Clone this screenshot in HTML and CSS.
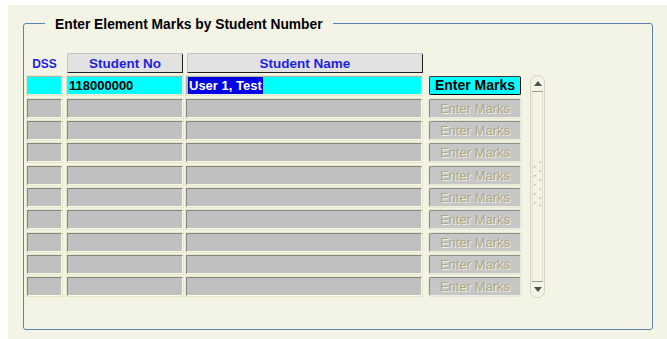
FILE: index.html
```html
<!DOCTYPE html>
<html>
<head>
<meta charset="utf-8">
<title>Enter Element Marks by Student Number</title>
<link rel="stylesheet" href="styles.css">
</head>
<body>
<div class="panel">
  <fieldset class="group">
    <legend class="title">Enter Element Marks by Student Number</legend>
    <div class="grid">
      <div class="hdr-dss">DSS</div>
      <div class="hdr hdr-no">Student No</div>
      <div class="hdr hdr-name">Student Name</div>
      <div class="hdr-spacer"></div>

      <div class="scroll">
        <div class="sb-btn sb-up"><svg width="8" height="5" viewBox="0 0 8 5"><polygon points="0,5 8,5 4,0" fill="#4e4e4e"/></svg></div>
        <div class="sb-track">
          <svg class="grip" width="10" height="52" viewBox="0 0 10 52">
            <g stroke="#8e8e78" stroke-width="1">
              <line x1="7" y1="4" x2="9" y2="2"/>
              <line x1="1" y1="9" x2="3" y2="7"/>
              <line x1="7" y1="14" x2="9" y2="12"/>
              <line x1="1" y1="19" x2="3" y2="17"/>
              <line x1="7" y1="24" x2="9" y2="22"/>
              <line x1="1" y1="29" x2="3" y2="27"/>
              <line x1="7" y1="34" x2="9" y2="32"/>
              <line x1="1" y1="39" x2="3" y2="37"/>
              <line x1="7" y1="44" x2="9" y2="42"/>
              <line x1="1" y1="49" x2="3" y2="47"/>
              <line x1="7" y1="52" x2="9" y2="50"/>
            </g>
          </svg>
        </div>
        <div class="sb-btn sb-down"><svg width="8" height="5" viewBox="0 0 8 5"><polygon points="0,0 8,0 4,5" fill="#4e4e4e"/></svg></div>
      </div>

      <div class="cell c-dss cyan"></div>
      <div class="cell c-no cyan">118000000</div>
      <div class="cell c-name cyan"><span class="sel">User 1, Test</span></div>
      <button class="btn btn-on">Enter Marks</button>

      <div class="cell c-dss"></div><div class="cell c-no"></div><div class="cell c-name"></div><button class="btn btn-off" disabled>Enter Marks</button>
      <div class="cell c-dss"></div><div class="cell c-no"></div><div class="cell c-name"></div><button class="btn btn-off" disabled>Enter Marks</button>
      <div class="cell c-dss"></div><div class="cell c-no"></div><div class="cell c-name"></div><button class="btn btn-off" disabled>Enter Marks</button>
      <div class="cell c-dss"></div><div class="cell c-no"></div><div class="cell c-name"></div><button class="btn btn-off" disabled>Enter Marks</button>
      <div class="cell c-dss"></div><div class="cell c-no"></div><div class="cell c-name"></div><button class="btn btn-off" disabled>Enter Marks</button>
      <div class="cell c-dss"></div><div class="cell c-no"></div><div class="cell c-name"></div><button class="btn btn-off" disabled>Enter Marks</button>
      <div class="cell c-dss"></div><div class="cell c-no"></div><div class="cell c-name"></div><button class="btn btn-off" disabled>Enter Marks</button>
      <div class="cell c-dss"></div><div class="cell c-no"></div><div class="cell c-name"></div><button class="btn btn-off" disabled>Enter Marks</button>
      <div class="cell c-dss"></div><div class="cell c-no"></div><div class="cell c-name"></div><button class="btn btn-off" disabled>Enter Marks</button>
    </div>
  </fieldset>
</div>
</body>
</html>
```
FILE: styles.css
```css
html {
  background: #ffffff;
}
body {
  margin: 0;
  font-family: "Liberation Sans", Arial, sans-serif;
}
.panel {
  margin: 5px 0 0 8px;
  height: 334px;
  box-sizing: border-box;
  background: #f4f4e6;
  padding: 10px 14px 9px 15px;
  display: flex;
  flex-direction: column;
}
.group {
  flex: 1;
  margin: 0;
  min-width: 0;
  border: 1px solid #5c84b0;
  border-radius: 3px;
  padding: 21px 0 0 3px;
}
.title {
  margin-left: 18px;
  padding: 3px 10px 0;
  font-size: 13.8px;
  font-weight: bold;
  line-height: 14px;
  color: #000;
}
.grid {
  display: grid;
  grid-template-columns: 40px 119px 243px 101px 15px;
  grid-template-rows: 20px repeat(10, 19px);
  row-gap: 3.33px;
}
.hdr-dss {
  width: 35px;
  text-align: center;
  color: #1e1ee4;
  font-size: 12px;
  font-weight: bold;
  line-height: 14px;
  padding-top: 4px;
}
.hdr {
  box-sizing: border-box;
  height: 20px;
  background: #e2e2e2;
  border: 1px solid;
  border-color: #c4c4c4 #1e1e1e #1e1e1e #c4c4c4;
  border-radius: 2px 2px 0 0;
  color: #1e1ee4;
  font-size: 13.5px;
  font-weight: bold;
  line-height: 19px;
  text-align: center;
}
.hdr-no { width: 116px; }
.hdr-name { width: 236px; margin-left: 1px; }
.hdr-spacer { grid-column: span 2; }

.cell {
  box-sizing: border-box;
  height: 19px;
  background: #c0c0c0;
  border: 1px solid;
  border-color: #86867e #fbfbe8 #fbfbe8 #86867e;
  box-shadow: 0 0 0 1px #e6e6c8;
  font-size: 13px;
  font-weight: bold;
  line-height: 17px;
  padding-left: 1px;
  color: #000;
  white-space: nowrap;
}
.c-dss { width: 35px; }
.c-no { width: 116px; }
.c-name { width: 236px; }
.cyan {
  background: #00ffff;
  border-color: #a8b8a8 #e6f0dc #e6f0dc #a8b8a8;
}
.sel {
  display: inline-block;
  background: #0000e4;
  color: #ffffff;
  padding: 0 1px;
  height: 17px;
}
.btn {
  box-sizing: border-box;
  width: 92px;
  height: 19px;
  margin: 0;
  padding: 0;
  border: 1px solid;
  border-radius: 2px;
  font-family: "Liberation Sans", Arial, sans-serif;
  text-align: center;
  white-space: nowrap;
}
.btn-on {
  background: #00ffff;
  border-color: #3a3a3a #000 #000 #3a3a3a;
  font-size: 14px;
  font-weight: bold;
  line-height: 17px;
  color: #000;
}
.btn-off {
  background: #c6c6c6;
  border-color: #8e8e88 #ecece0 #ecece0 #8e8e88;
  box-shadow: 0 0 0 1px #e8e8d0;
  font-size: 13px;
  line-height: 17px;
  color: #aea886;
  text-shadow: 1px 1px 0 #eeeede;
}

.scroll {
  grid-column: 5;
  grid-row: 2 / span 10;
  margin: -1px 0 -2px;
  box-sizing: border-box;
  width: 15px;
  border: 1px solid #d6d6be;
  border-radius: 7px;
  display: flex;
  flex-direction: column;
}
.sb-btn {
  height: 15px;
  display: flex;
  align-items: center;
  justify-content: center;
  flex: none;
}
.sb-up {
  border-bottom: 1px solid #9c9c8c;
  margin: 0 1px;
}
.sb-down {
  border-top: 1px solid #9c9c8c;
  margin: 0 1px;
}
.sb-track {
  flex: 1;
  margin: 0 1px;
  border-left: 1px solid #e2e2cc;
  border-right: 1px solid #e2e2cc;
  display: flex;
  align-items: center;
  justify-content: center;
}
.grip {
  display: block;
  margin-top: -8px;
}
```
